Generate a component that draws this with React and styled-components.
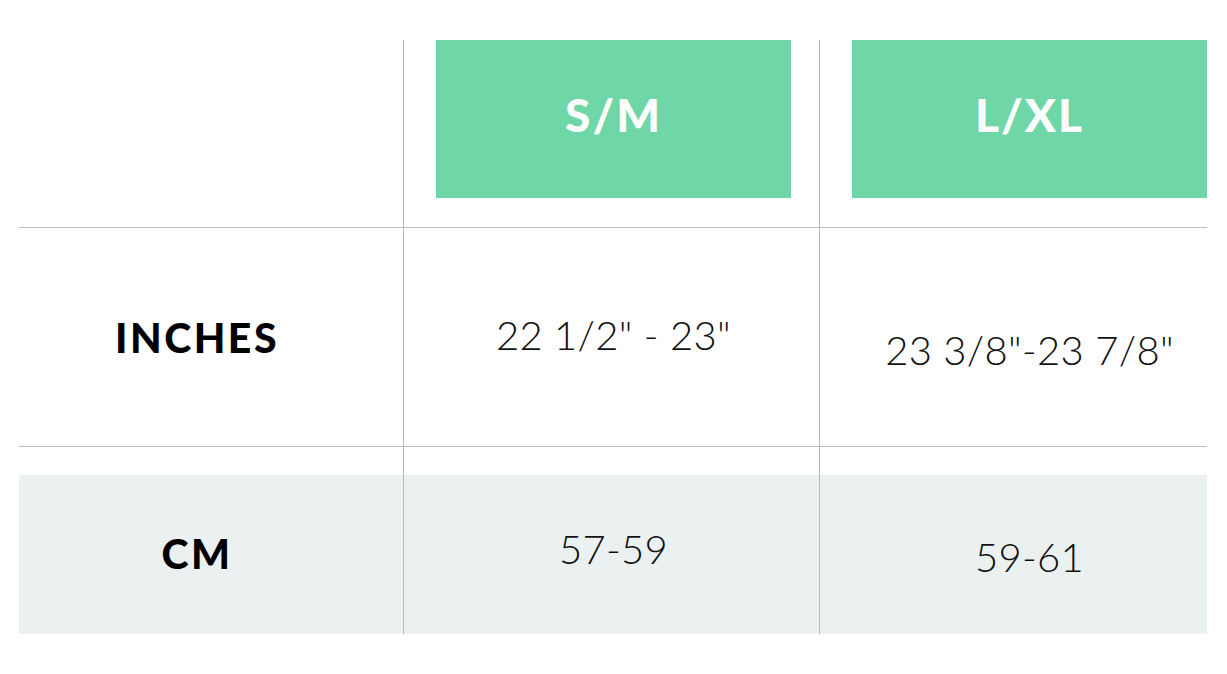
import React from 'react'
import styled, { createGlobalStyle } from 'styled-components'

const GlobalStyle = createGlobalStyle`
  html, body {
    margin: 0;
    padding: 0;
    background: #fff;
  }
  body {
    font-family: Lato, "Noto Sans", sans-serif;
    color: #111;
  }
`

// offset = how far each value sits from the middle of its cell, in px
const rows = [
  { label: 'INCHES', labelOffset: 0, values: ['22 1/2" - 23"', '23 3/8"-23 7/8"'], offsets: [-2, 13], shaded: false },
  { label: 'CM', labelOffset: -1, values: ['57-59', '59-61'], offsets: [-6, 2], shaded: true },
]

const App = () => {
  return (
    <Page>
      <GlobalStyle />
      <Table>
        <HeadRow>
          <Cell />
          <Cell $divider>
            <SizeTag>S/M</SizeTag>
          </Cell>
          <Cell $divider $last>
            <SizeTag>L/XL</SizeTag>
          </Cell>
        </HeadRow>
        {rows.map((row) => (
          <Row key={row.label} $shaded={row.shaded}>
            <Cell>
              <Label $top={row.shaded ? 28 : 0} $offset={row.labelOffset}>{row.label}</Label>
            </Cell>
            {row.values.map((v, i) => (
              <Cell key={v} $divider $last={i === 1}>
                <Value $top={row.shaded ? 28 : 0} $offset={row.offsets[i]}>{v}</Value>
              </Cell>
            ))}
          </Row>
        ))}
      </Table>
    </Page>
  )
}

export default App

const Page = styled.div`
  width: 1227px;
  height: 674px;
  padding: 40px 0 0 19px;
  box-sizing: border-box;
`

const Table = styled.div`
  width: 1188px;
`

const HeadRow = styled.div`
  display: grid;
  grid-template-columns: 384px 416px 388px;
  height: 187px;
  border-bottom: 1px solid #bdbdbd;
`

const Row = styled.div`
  display: grid;
  grid-template-columns: 384px 416px 388px;
  height: ${(p) => (p.$shaded ? '187px' : '218px')};
  border-bottom: ${(p) => (p.$shaded ? 'none' : '1px solid #bdbdbd')};
  background: ${(p) =>
    p.$shaded
      ? 'linear-gradient(to bottom, #fff 0, #fff 28px, #ebf0f0 28px)'
      : '#fff'};
`

const Cell = styled.div`
  box-sizing: border-box;
  border-left: ${(p) => (p.$divider ? '1px solid #b8b8b8' : 'none')};
  padding: 0 ${(p) => (p.$last ? '0' : '28px')} 0 ${(p) => (p.$divider ? '32px' : '0')};
  display: flex;
  flex-direction: column;
  align-items: stretch;
`

const SizeTag = styled.div`
  height: 158px;
  background: #6fd6a8;
  color: #fff;
  display: flex;
  align-items: center;
  justify-content: center;
  font-weight: 900;
  font-size: 46px;
  letter-spacing: 2px;
  padding-bottom: 9px;
  box-sizing: border-box;
`

const Label = styled.div`
  flex: 1;
  display: flex;
  align-items: center;
  justify-content: center;
  font-weight: 900;
  font-size: 41px;
  color: #000;
  letter-spacing: 2.5px;
  box-sizing: border-box;
  padding-top: ${(p) => p.$top + Math.max(0, p.$offset) * 2}px;
  padding-bottom: ${(p) => Math.max(0, -p.$offset) * 2}px;
`

const Value = styled.div`
  flex: 1;
  display: flex;
  align-items: center;
  justify-content: center;
  font-weight: 300;
  font-size: 40px;
  color: #111;
  letter-spacing: 0.3px;
  box-sizing: border-box;
  padding-top: ${(p) => p.$top + Math.max(0, p.$offset) * 2}px;
  padding-bottom: ${(p) => Math.max(0, -p.$offset) * 2}px;
`
